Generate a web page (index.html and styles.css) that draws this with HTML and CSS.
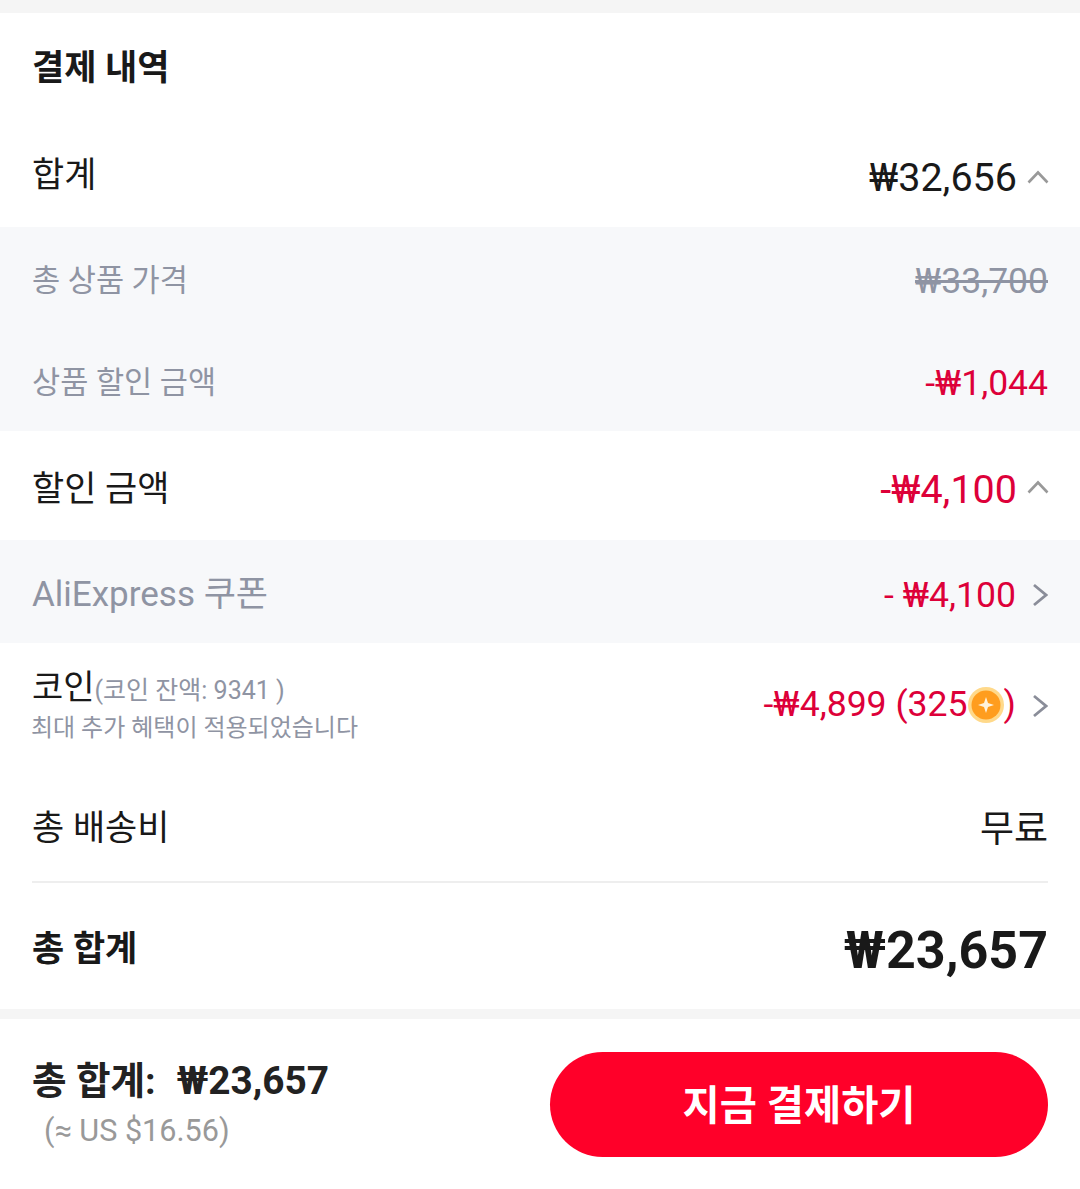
FILE: index.html
```html
<!DOCTYPE html>
<html lang="ko">
<head>
    <meta charset="UTF-8">
    <title>결제 내역</title>
    <link rel="stylesheet" href="styles.css">
</head>
<body>
    <main class="summary">
        <h1 class="summary-title">결제 내역</h1>

        <div class="row row-total">
            <span class="label">합계</span>
            <span class="value">₩32,656<svg class="chev" viewBox="0 0 22 14"><path d="M1.5 12.5 L11 2.5 L20.5 12.5"/></svg></span>
        </div>

        <div class="sub">
            <div class="row row-sub">
                <span class="label">총 상품 가격</span>
                <span class="value strike">₩33,700</span>
            </div>
            <div class="row row-sub">
                <span class="label">상품 할인 금액</span>
                <span class="value red">-₩1,044</span>
            </div>
        </div>

        <div class="row row-discount">
            <span class="label">할인 금액</span>
            <span class="value red">-₩4,100<svg class="chev" viewBox="0 0 22 14"><path d="M1.5 12.5 L11 2.5 L20.5 12.5"/></svg></span>
        </div>

        <div class="sub">
            <div class="row row-coupon">
                <span class="label">AliExpress 쿠폰</span>
                <span class="value red small">- ₩4,100<svg class="arrow" viewBox="0 0 16 24"><path d="M2 2 L14 12 L2 22"/></svg></span>
            </div>
        </div>

        <div class="row row-coin">
            <div class="coin-text">
                <div class="label">코인<span class="coin-balance">(코인 잔액: 9341 )</span></div>
                <div class="coin-note">최대 추가 혜택이 적용되었습니다</div>
            </div>
            <span class="value red small">-₩4,899 (325<svg class="coin" viewBox="0 0 36 36"><circle cx="18" cy="18" r="18" fill="#ffd98a"/><circle cx="18" cy="18" r="14.5" fill="#ff9d1e"/><path d="M18 10 L20 16 L26 18 L20 20 L18 26 L16 20 L10 18 L16 16 Z" fill="#fff3dc"/></svg>)<svg class="arrow" viewBox="0 0 16 24"><path d="M2 2 L14 12 L2 22"/></svg></span>
        </div>

        <div class="row row-ship">
            <span class="label">총 배송비</span>
            <span class="value">무료</span>
        </div>

        <div class="row row-grand">
            <span class="label">총 합계</span>
            <span class="value">₩23,657</span>
        </div>
    </main>

    <footer class="paybar">
        <div class="pay-sum">
            <div class="pay-total"><span>총 합계:</span><span class="pay-amount">₩23,657</span></div>
            <div class="pay-usd">(≈ US $16.56)</div>
        </div>
        <button class="pay-btn">지금 결제하기</button>
    </footer>
</body>
</html>
```

FILE: styles.css
```css
body {
    margin: 0;
    background-color: #f5f5f5;
    font-family: Roboto, "Noto Sans CJK KR", sans-serif;
    color: #191919;
}

.summary {
    margin-top: 13px;
    background-color: #fff;
    height: 996px;
}

.summary-title {
    margin: 0;
    padding: 0 32px;
    height: 109px;
    line-height: 112px;
    font-size: 35px;
    font-weight: 700;
}

.row {
    display: flex;
    justify-content: space-between;
    align-items: center;
    padding: 0 32px;
}

.label {
    font-size: 35px;
}

.value {
    display: flex;
    align-items: center;
    font-size: 39.5px;
    padding-top: 4px;
}

.red {
    color: #dd0039;
}

.small {
    font-size: 35.6px;
}

.strike {
    text-decoration: line-through;
}

/* 회색 영역 */
.sub {
    background-color: #f7f8fa;
}

.sub .label {
    color: #8f94a3;
}

.row-total {
    height: 105px;
}

.row-total .label {
    padding-bottom: 6px;
}

.row-total .chev {
    margin-top: -2px;
    margin-left: 10px;
}

.row-total .value {
    padding-top: 6px;
}

.row-sub {
    height: 102px;
}

.row-sub .label {
    font-size: 30.6px;
    padding-bottom: 1px;
}

.row-sub .value {
    font-size: 35.5px;
    padding-top: 6px;
}

.row-sub .strike {
    color: #8f94a3;
}

.row-discount {
    height: 109px;
}

.row-discount .value {
    padding-top: 8px;
}

.row-discount .chev {
    margin-top: -6px;
    margin-left: 10px;
}

.row-coupon {
    height: 103px;
}

.row-coupon .label {
    padding-bottom: 2px;
}

.row-coupon .value {
    padding-top: 6px;
}

.row-coin {
    height: 126px;
}

.row-coin .value {
    padding-top: 0;
    padding-bottom: 5px;
}

.row-coin .arrow {
    margin-top: 5px;
}

.coin-text {
    padding-bottom: 10px;
}

.coin-text .label {
    font-size: 34px;
}

.coin-balance {
    font-size: 25px;
    color: #8f94a3;
}

.coin-note {
    font-size: 24px;
    color: #8f94a3;
    margin-left: -1px;
    margin-top: -1px;
}

.row-ship {
    height: 112px;
    box-sizing: border-box;
}

.row-ship .label {
    padding-bottom: 2px;
}

.row-ship .value {
    font-size: 37px;
    padding-top: 2px;
}

.row-grand {
    margin: 0 32px;
    padding: 0;
    height: 127px;
    border-top: 2px solid #eeeeee;
}

.row-grand .label {
    font-weight: 700;
    padding-bottom: 2px;
}

.row-grand .value {
    font-size: 52px;
    font-weight: 700;
    padding-top: 8px;
}

.chev {
    width: 22px;
    height: 14px;
    margin-left: 11px;
    margin-right: -1px;
    fill: none;
    stroke: #999;
    stroke-width: 2.6;
}

.arrow {
    width: 16px;
    height: 24px;
    margin-left: 16px;
    fill: none;
    stroke: #8a8d99;
    stroke-width: 2.8;
}

.coin {
    width: 36px;
    height: 36px;
    margin-top: 2px;
}

/* 하단 결제 바 */
.paybar {
    margin-top: 10px;
    height: 170px;
    background-color: #fff;
    display: flex;
    justify-content: space-between;
    align-items: center;
    padding: 0 32px;
}

.pay-sum {
    padding-top: 4px;
}

.pay-total {
    display: flex;
    align-items: baseline;
    gap: 21px;
    font-size: 37.6px;
    font-weight: 700;
    line-height: 46px;
    color: #222;
}

.pay-amount {
    font-size: 38.8px;
}

.pay-usd {
    margin-top: 4px;
    padding-left: 12px;
    font-size: 30.6px;
    line-height: 46px;
    color: #999;
}

.pay-btn {
    width: 498px;
    height: 105px;
    border: none;
    border-radius: 53px;
    background-color: #ff0029;
    color: #fff;
    font-family: inherit;
    font-size: 40.4px;
    font-weight: 700;
    padding-bottom: 4px;
}
```
